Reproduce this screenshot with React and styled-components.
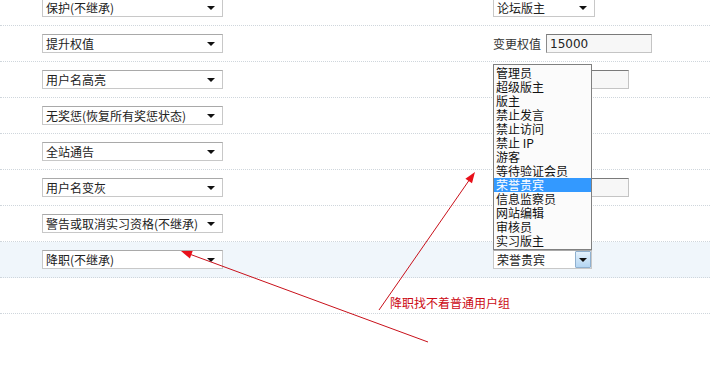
import styled, { createGlobalStyle } from "styled-components";

const GlobalStyle = createGlobalStyle`
  html, body {
    margin: 0;
    padding: 0;
    background: #fff;
  }
  body {
    font-family: "Noto Sans CJK SC", "DejaVu Sans", sans-serif;
    font-size: 12px;
    color: #333;
  }
`;

const groups = [
  "管理员",
  "超级版主",
  "版主",
  "禁止发言",
  "禁止访问",
  "禁止 IP",
  "游客",
  "等待验证会员",
  "荣誉贵宾",
  "信息监察员",
  "网站编辑",
  "审核员",
  "实习版主",
];

export default function App() {
  return (
    <Page>
      <GlobalStyle />
      <List>
        <Row>
          <Select width={181} value="保护(不继承)" />
          <Select width={102} value="论坛版主" />
        </Row>
        <Row>
          <Select width={181} value="提升权值" />
          <Field>
            <Label>变更权值</Label>
            <Input width={106} defaultValue="15000" />
          </Field>
        </Row>
        <Row>
          <Select width={181} value="用户名高亮" />
          <Field>
            <Input width={78} offset={58} defaultValue="" />
          </Field>
        </Row>
        <Row>
          <Select width={181} value="无奖惩(恢复所有奖惩状态)" />
          <span />
        </Row>
        <Row>
          <Select width={181} value="全站通告" />
          <span />
        </Row>
        <Row>
          <Select width={181} value="用户名变灰" />
          <Field>
            <Input width={78} offset={58} defaultValue="" />
          </Field>
        </Row>
        <Row>
          <Select width={181} value="警告或取消实习资格(不继承)" />
          <span />
        </Row>
        <Row $active>
          <Select width={181} value="降职(不继承)" />
          <Select width={99} value="荣誉贵宾" open>
            <ListBox>
              {groups.map((g) => (
                <Option key={g} $selected={g === "荣誉贵宾"}>
                  {g}
                </Option>
              ))}
            </ListBox>
          </Select>
        </Row>
        <Row>
          <span />
          <span />
        </Row>
      </List>

      <Arrows width="710" height="367" viewBox="0 0 710 367">
        <line x1="428" y1="342" x2="188" y2="253.5" stroke="#c8101a" strokeWidth="1" />
        <polygon points="181,251 192.7,251 189.9,258.6" fill="#e8101a" />
        <line x1="379" y1="310" x2="470" y2="179" stroke="#c8101a" strokeWidth="1" />
        <polygon points="475,172 472,183.3 465.4,178.7" fill="#e8101a" />
      </Arrows>
      <Note>降职找不着普通用户组</Note>
    </Page>
  );
}

function Select({ width, value, open, children }) {
  return (
    <SelectBox style={{ width }}>
      <SelectText>{value}</SelectText>
      <SelectButton $open={open}>
        <Caret />
      </SelectButton>
      {children}
    </SelectBox>
  );
}

const Page = styled.div`
  position: relative;
  width: 710px;
  height: 367px;
  overflow: hidden;
`;

const List = styled.div`
  margin-top: -10px;
  display: flex;
  flex-direction: column;
`;

const Row = styled.div`
  height: 35px;
  display: grid;
  grid-template-columns: 451px 1fr;
  align-items: center;
  padding-left: 42px;
  border-bottom: 1px dotted #cfd6dc;
  background: ${(p) => (p.$active ? "#f0f6fb" : "transparent")};
`;

const SelectBox = styled.div`
  position: relative;
  box-sizing: border-box;
  height: 19px;
  display: flex;
  align-items: stretch;
  border: 1px solid #c8c8c8;
  border-top-color: #a9a9a9;
  background: #fff;
`;

const SelectText = styled.span`
  flex: 1;
  padding-left: 3px;
  line-height: 17px;
  font-size: 12px;
  color: #222;
  white-space: nowrap;
  overflow: hidden;
`;

const SelectButton = styled.span`
  width: 16px;
  display: flex;
  align-items: center;
  justify-content: center;
  box-sizing: border-box;
  background: ${(p) =>
    p.$open ? "linear-gradient(#e4f1fc, #b4d6f3)" : "transparent"};
  border: ${(p) => (p.$open ? "1px solid #8fb0cf" : "none")};
  border-radius: ${(p) => (p.$open ? "1px" : "0")};
  margin-right: ${(p) => (p.$open ? "0" : "3px")};
`;

const Caret = styled.span`
  width: 0;
  height: 0;
  border-left: 4px solid transparent;
  border-right: 4px solid transparent;
  border-top: 4px solid #111;
`;

const ListBox = styled.ul`
  position: absolute;
  left: -1px;
  bottom: 100%;
  width: 99px;
  box-sizing: border-box;
  margin: 0 0 1px;
  padding: 1px 0;
  list-style: none;
  border: 1px solid #808080;
  background: #fbfbfb;
  z-index: 2;
`;

const Option = styled.li`
  height: 14px;
  line-height: 14px;
  padding-left: 2px;
  font-size: 12px;
  color: ${(p) => (p.$selected ? "#fff" : "#111")};
  background: ${(p) => (p.$selected ? "#3399ff" : "transparent")};
  white-space: nowrap;
`;

const Field = styled.div`
  display: flex;
  align-items: center;
`;

const Label = styled.span`
  font-size: 12px;
  color: #333;
  margin-right: 5px;
`;

const Input = styled.input.attrs({ type: "text", readOnly: true })`
  box-sizing: border-box;
  width: ${(p) => p.width}px;
  height: 19px;
  margin: 0 0 0 ${(p) => p.offset || 0}px;
  padding: 0 3px;
  border: 1px solid #c4c4c4;
  border-top-color: #7a7a7a;
  border-left-color: #8a8a8a;
  background: #f7f7f7;
  font-family: "DejaVu Sans", sans-serif;
  font-size: 12px;
  color: #222;
  outline: none;
`;

const Arrows = styled.svg`
  position: absolute;
  left: 0;
  top: 0;
  pointer-events: none;
  z-index: 3;
`;

const Note = styled.span`
  position: absolute;
  left: 390px;
  top: 295px;
  font-size: 12px;
  line-height: 16px;
  color: #cc0a14;
  z-index: 3;
`;
